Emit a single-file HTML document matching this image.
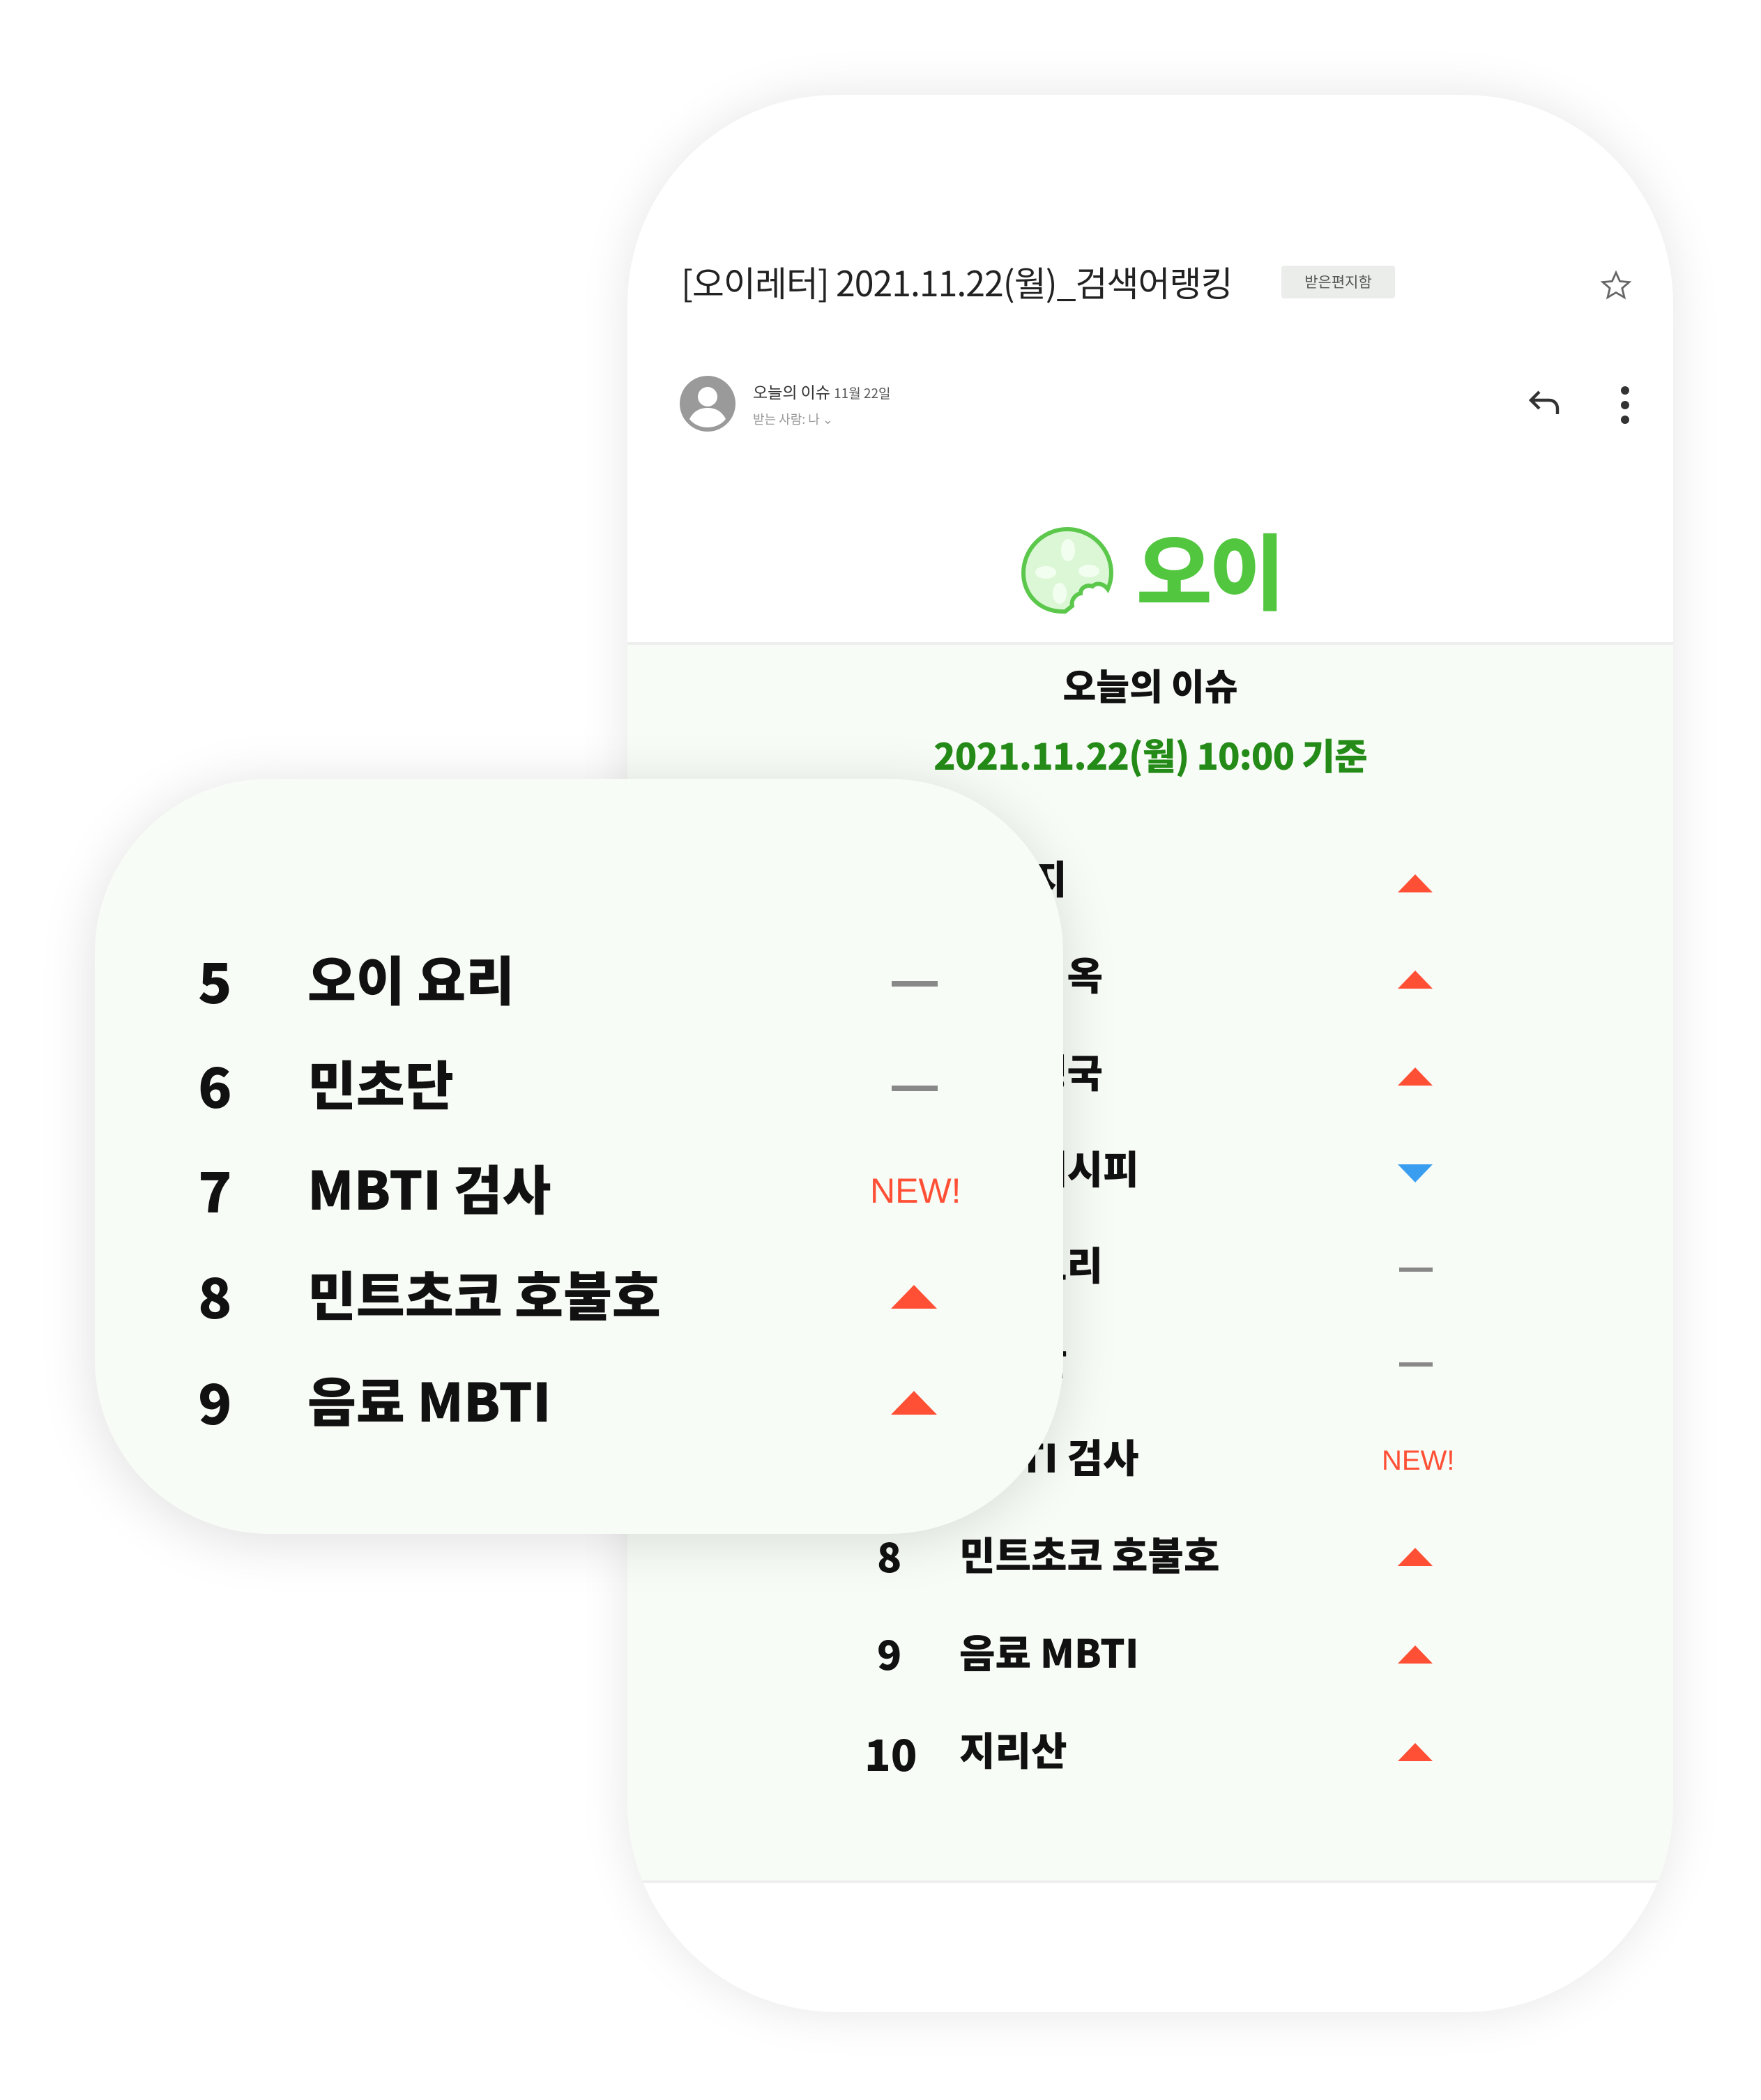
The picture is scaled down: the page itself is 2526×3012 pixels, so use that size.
<!DOCTYPE html>
<html><head><meta charset="utf-8">
<style>
*{margin:0;padding:0;box-sizing:border-box}
body{width:2526px;height:3012px;background:#fff;position:relative;overflow:hidden;font-family:"Liberation Sans","Noto Sans CJK KR",sans-serif}
.abs{position:absolute}
.phone{left:900px;top:136px;width:1500px;height:2750px;border-radius:300px;background:#fff;box-shadow:0 0 70px rgba(0,0,0,0.10);overflow:hidden}
.kr{font-family:"Noto Sans CJK KR",sans-serif}
.title{left:77px;top:232px;font-size:50px;color:#222;white-space:nowrap;font-family:"Noto Sans CJK KR",sans-serif;font-weight:400;letter-spacing:-1px}
.badge{left:938px;top:245px;width:163px;height:47px;background:#ebedeb;border-radius:4px;font-size:21px;color:#555;text-align:center;line-height:47px}
.green{left:0;top:785px;width:1500px;height:1780px;background:#f8fcf6;border-top:4px solid #eeeeee;border-bottom:4px solid #eeeeee}
.row{position:absolute;height:80px;font-family:"Noto Sans CJK KR",sans-serif;font-weight:900;color:#111;white-space:nowrap}
.up{width:0;height:0;border-left:25px solid transparent;border-right:25px solid transparent;border-bottom:26px solid #ff5036}
.down{width:0;height:0;border-left:25px solid transparent;border-right:25px solid transparent;border-top:26px solid #3a9ef0}
.dash{width:48px;height:6px;background:#888}
.new{color:#ff5036;font-weight:400;font-family:"Liberation Sans",sans-serif}
.card{left:136px;top:1117px;width:1389px;height:1083px;border-radius:250px;background:#f8fcf6;box-shadow:0 10px 80px rgba(0,0,0,0.13)}
</style></head><body>
<div class="abs phone">
  <div class="abs title">[오이레터] 2021.11.22(월)_검색어랭킹</div>
  <div class="abs badge kr">받은편지함</div>
  <svg class="abs" style="left:1394px;top:250px" width="48" height="48" viewBox="0 0 24 24"><path d="M12 2.5l2.8 6.2 6.7.6-5.1 4.4 1.6 6.6L12 16.8l-6 3.5 1.6-6.6-5.1-4.4 6.7-.6z" fill="none" stroke="#666" stroke-width="1.4"/></svg>
  <svg class="abs" style="left:75px;top:403px" width="80" height="80" viewBox="0 0 40 40"><circle cx="20" cy="20" r="20" fill="#9a9a9a"/><circle cx="20" cy="15" r="7" fill="#fff"/><path d="M7 31c3-6 8-8 13-8s10 2 13 8c-3 4-8 6-13 6s-10-2-13-6z" fill="#fff"/></svg>
  <div class="abs kr" style="left:180px;top:408px;font-size:23px;color:#333;white-space:nowrap">오늘의 이슈 <span style="font-size:19px;color:#555">11월 22일</span></div>
  <div class="abs kr" style="left:180px;top:452px;font-size:18px;color:#999;white-space:nowrap">받는 사람: 나 ⌄</div>
  <svg class="abs" style="left:1290px;top:418px" width="56" height="48" viewBox="0 0 28 24"><path d="M9 4L3 10l6 6M3 10h13c4 0 6 3 6 6v4" fill="none" stroke="#333" stroke-width="2.2"/></svg>
  <div class="abs" style="left:1425px;top:418px;width:12px;height:12px;border-radius:6px;background:#333"></div>
  <div class="abs" style="left:1425px;top:439px;width:12px;height:12px;border-radius:6px;background:#333"></div>
  <div class="abs" style="left:1425px;top:460px;width:12px;height:12px;border-radius:6px;background:#333"></div>
  <svg class="abs" style="left:564px;top:619px" width="134" height="134" viewBox="0 0 134 134"><path d="M67 4a63 63 0 0 1 63 63c0 8-2 16-5 23-6-8-16-10-22-4-8-3-17 2-17 10-8 2-14 10-12 18l-10 8C28 124 4 98 4 67A63 63 0 0 1 67 4z" fill="#dcf7d6" stroke="#5bc84c" stroke-width="6"/><ellipse cx="68" cy="34" rx="10" ry="16" fill="#f2fff0"/><ellipse cx="36" cy="66" rx="15" ry="9" fill="#f2fff0"/><ellipse cx="98" cy="64" rx="15" ry="9" fill="#f2fff0"/><ellipse cx="56" cy="96" rx="10" ry="15" fill="#f2fff0"/></svg>
  <div class="abs kr" style="left:730px;top:592px;font-size:118px;font-weight:900;color:#52c63f;letter-spacing:-4px">오이</div>
  <div class="abs green"></div>
  <div class="abs kr" style="left:0;width:1500px;text-align:center;top:808px;font-size:52px;font-weight:900;color:#111">오늘의 이슈</div>
  <div class="abs kr" style="left:0;width:1500px;text-align:center;top:908px;font-size:52px;font-weight:900;color:#248a18;letter-spacing:-1px">2021.11.22(월) 10:00 기준</div>
  <!-- rows -->
  <div class="row" style="left:358px;top:1082px;font-size:58px">1</div>
  <div class="row" style="left:476px;top:1082px;font-size:56px">오이지</div>
  <div class="abs up" style="left:1105px;top:1118px"></div>
  <div class="row" style="left:358px;top:1220px;font-size:58px">2</div>
  <div class="row" style="left:476px;top:1220px;font-size:56px">오이지옥</div>
  <div class="abs up" style="left:1105px;top:1256px"></div>
  <div class="row" style="left:358px;top:1360px;font-size:58px">3</div>
  <div class="row" style="left:476px;top:1360px;font-size:56px">오이냉국</div>
  <div class="abs up" style="left:1105px;top:1395px"></div>
  <div class="row" style="left:358px;top:1498px;font-size:58px">4</div>
  <div class="row" style="left:476px;top:1498px;font-size:56px">오이레시피</div>
  <div class="abs down" style="left:1105px;top:1534px"></div>
  <div class="row" style="left:358px;top:1636px;font-size:58px">5</div>
  <div class="row" style="left:476px;top:1636px;font-size:56px">오이요리</div>
  <div class="abs dash" style="left:1107px;top:1682px"></div>
  <div class="row" style="left:358px;top:1772px;font-size:58px">6</div>
  <div class="row" style="left:476px;top:1772px;font-size:56px">민초단</div>
  <div class="abs dash" style="left:1107px;top:1818px"></div>
  <div class="row" style="left:358px;top:1912px;font-size:58px">7</div>
  <div class="row" style="left:476px;top:1912px;font-size:56px">MBTI 검사</div>
  <div class="abs new" style="left:1082px;top:1937px;font-size:40px">NEW!</div>
  <div class="row" style="left:358px;top:2052px;font-size:58px">8</div>
  <div class="row" style="left:476px;top:2052px;font-size:56px">민트초코 호불호</div>
  <div class="abs up" style="left:1105px;top:2084px"></div>
  <div class="row" style="left:358px;top:2192px;font-size:58px">9</div>
  <div class="row" style="left:476px;top:2192px;font-size:56px">음료 MBTI</div>
  <div class="abs up" style="left:1105px;top:2224px"></div>
  <div class="row" style="left:340px;top:2332px;font-size:62px">10</div>
  <div class="row" style="left:476px;top:2332px;font-size:56px">지리산</div>
  <div class="abs up" style="left:1105px;top:2364px"></div>
</div>
<div class="abs card">
  <div class="row" style="left:148px;top:230px;font-size:80px">5</div>
  <div class="row" style="left:305px;top:230px;font-size:76px">오이 요리</div>
  <div class="abs dash" style="left:1143px;top:290px;width:66px;height:8px"></div>
  <div class="row" style="left:148px;top:380px;font-size:80px">6</div>
  <div class="row" style="left:305px;top:380px;font-size:76px">민초단</div>
  <div class="abs dash" style="left:1143px;top:440px;width:66px;height:8px"></div>
  <div class="row" style="left:148px;top:530px;font-size:80px">7</div>
  <div class="row" style="left:305px;top:530px;font-size:76px">MBTI 검사</div>
  <div class="abs new" style="left:1112px;top:562px;font-size:50px">NEW!</div>
  <div class="row" style="left:148px;top:682px;font-size:80px">8</div>
  <div class="row" style="left:305px;top:682px;font-size:76px">민트초코 호불호</div>
  <div class="abs up" style="left:1142px;top:726px;border-left-width:33px;border-right-width:33px;border-bottom-width:34px"></div>
  <div class="row" style="left:148px;top:834px;font-size:80px">9</div>
  <div class="row" style="left:305px;top:834px;font-size:76px">음료 MBTI</div>
  <div class="abs up" style="left:1142px;top:878px;border-left-width:33px;border-right-width:33px;border-bottom-width:34px"></div>
</div>
</body></html>
